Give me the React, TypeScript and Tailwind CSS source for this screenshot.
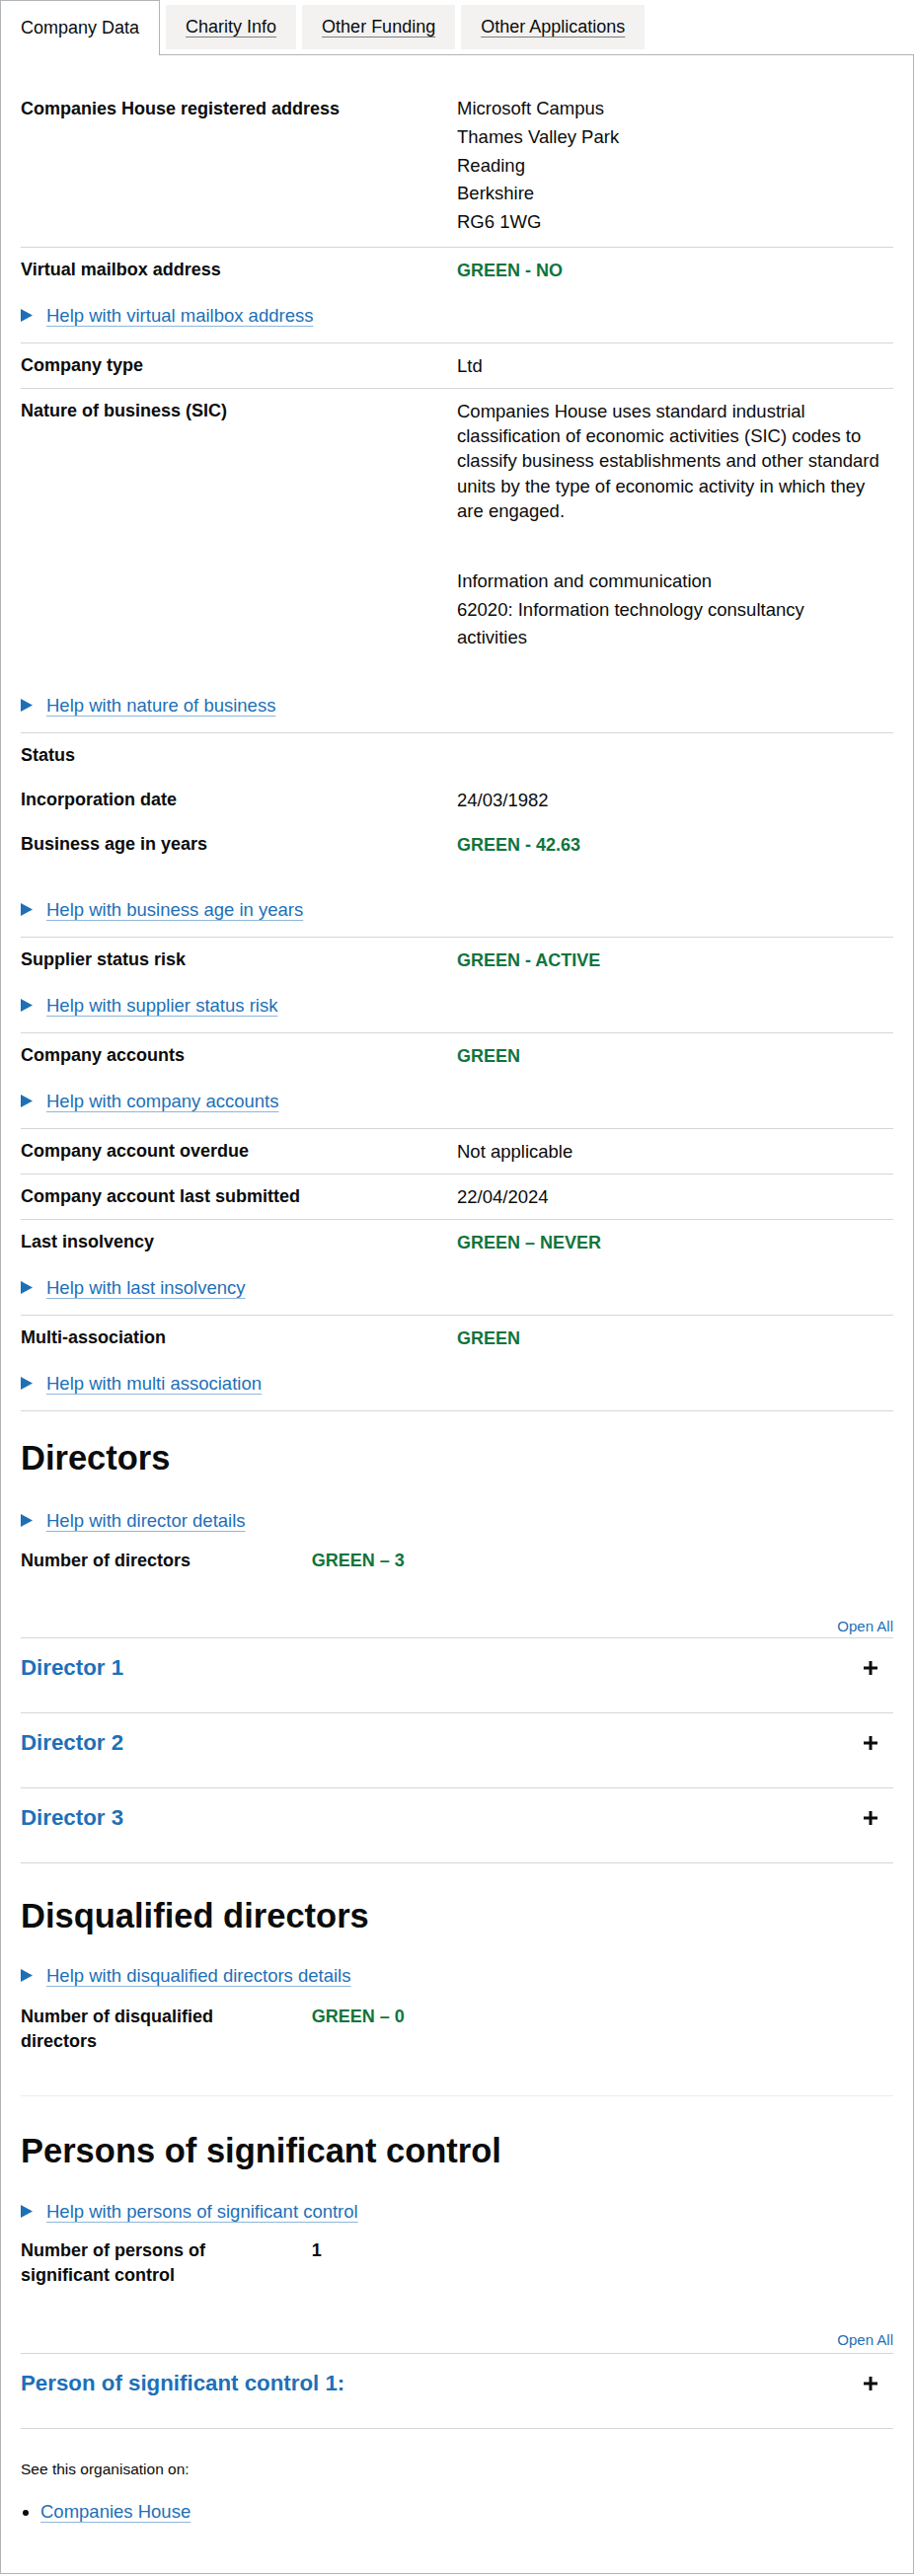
import React from "react";

const BORDER = "border-[#b1b4b6]";

function Triangle() {
  return (
    <svg width="12" height="13" viewBox="0 0 12 13" className="shrink-0">
      <path d="M0 0 L12 6.5 L0 13 Z" fill="#1d70b8" />
    </svg>
  );
}

function Help({ text, className = "" }: { text: string; className?: string }) {
  return (
    <div className={`flex items-center ${className}`}>
      <Triangle />
      <span className="ml-[14px] text-[18.5px] leading-[25px] text-[#1d70b8] underline decoration-[#1d70b8]/50 decoration-1 underline-offset-[4px]">
        {text}
      </span>
    </div>
  );
}

function Green({ children }: { children: React.ReactNode }) {
  return <span className="font-bold text-[18px] text-[#0f743c]">{children}</span>;
}

function Row({
  label,
  children,
  help,
  helpClass = "mt-[20px]",
  border = true,
  labelClass = "leading-[25px]",
}: {
  label: string;
  children?: React.ReactNode;
  help?: string;
  helpClass?: string;
  border?: boolean;
  labelClass?: string;
}) {
  return (
    <div className={`py-[10px] ${border ? "border-b border-[#d6d6d6]" : ""}`}>
      <div className="flex">
        <div className={`w-1/2 pr-5 font-bold text-[18px] ${labelClass}`}>{label}</div>
        <div className="w-1/2 text-[18.5px] leading-[25px]">{children}</div>
      </div>
      {help && <Help text={help} className={`${helpClass} mb-[5px]`} />}
    </div>
  );
}

function Plus() {
  return (
    <svg width="16" height="16" viewBox="0 0 16 16" className="mr-[15px] shrink-0">
      <path d="M8 1 V15 M1 8 H15" stroke="#0b0c0c" strokeWidth="3" />
    </svg>
  );
}

function AccSection({ title, last = false }: { title: string; last?: boolean }) {
  return (
    <div
      className={`border-t border-[#d6d6d6] pt-[15px] pb-[30px] flex items-center justify-between ${
        last ? "border-b" : ""
      }`}
    >
      <span className="text-[22.3px] leading-[30px] font-bold text-[#1d70b8]">{title}</span>
      <Plus />
    </div>
  );
}

function Heading({ children, className = "" }: { children: React.ReactNode; className?: string }) {
  return <h2 className={`text-[34.5px] leading-[40px] font-bold ${className}`}>{children}</h2>;
}

function CountRow({ label, children, className = "" }: { label: string; children: React.ReactNode; className?: string }) {
  return (
    <div className={`flex ${className}`}>
      <div className="w-1/3 pr-[30px] font-bold text-[18px] leading-[24.5px]">{label}</div>
      <div className="w-2/3 font-bold text-[18px] leading-[24.5px]">{children}</div>
    </div>
  );
}

export default function App() {
  return (
    <div className="w-[926px] bg-white text-[#0b0c0c] font-['Liberation_Sans',Arial,sans-serif]">
      {/* Tabs */}
      <div className="flex items-start h-[55px]">
        <div className={`relative z-10 h-[56px] bg-white border border-b-0 ${BORDER} px-[20px] flex items-center text-[18px]`}>
          Company Data
        </div>
        {["Charity Info", "Other Funding", "Other Applications"].map((t) => (
          <div
            key={t}
            className="ml-[6px] mt-[5px] h-[45px] bg-[#f3f2f1] px-[20px] flex items-center text-[18px] underline decoration-[#0b0c0c]/50 decoration-1 underline-offset-[4px]"
          >
            {t}
          </div>
        ))}
      </div>

      {/* Panel */}
      <div className={`border ${BORDER} px-[20px] pt-[30px] pb-[30px]`}>
        <Row label="Companies House registered address" labelClass="leading-[28.75px]">
          <div className="leading-[28.75px]">
            <div>Microsoft Campus</div>
            <div>Thames Valley Park</div>
            <div>Reading</div>
            <div>Berkshire</div>
            <div>RG6 1WG</div>
          </div>
        </Row>
        <Row label="Virtual mailbox address" help="Help with virtual mailbox address">
          <Green>GREEN - NO</Green>
        </Row>
        <Row label="Company type">Ltd</Row>
        <Row label="Nature of business (SIC)" help="Help with nature of business" helpClass="mt-[41.5px]">
          <div className="leading-[25.25px]">
            <div>Companies House uses standard industrial</div>
            <div>classification of economic activities (SIC) codes to</div>
            <div>classify business establishments and other standard</div>
            <div>units by the type of economic activity in which they</div>
            <div>are engaged.</div>
          </div>
          <div className="mt-[45px] leading-[28.5px]">
            <div>Information and communication</div>
            <div>62020: Information technology consultancy</div>
            <div>activities</div>
          </div>
        </Row>
        <Row label="Status" border={false} />
        <Row label="Incorporation date" border={false}>
          24/03/1982
        </Row>
        <Row label="Business age in years" help="Help with business age in years" helpClass="mt-[39.5px]">
          <Green>GREEN - 42.63</Green>
        </Row>
        <Row label="Supplier status risk" help="Help with supplier status risk">
          <Green>GREEN - ACTIVE</Green>
        </Row>
        <Row label="Company accounts" help="Help with company accounts">
          <Green>GREEN</Green>
        </Row>
        <Row label="Company account overdue">Not applicable</Row>
        <Row label="Company account last submitted">22/04/2024</Row>
        <Row label="Last insolvency" help="Help with last insolvency">
          <Green>GREEN – NEVER</Green>
        </Row>
        <Row label="Multi-association" help="Help with multi association">
          <Green>GREEN</Green>
        </Row>

        {/* Directors */}
        <Heading className="mt-[27px]">Directors</Heading>
        <Help text="Help with director details" className="mt-[31.5px]" />
        <CountRow label="Number of directors" className="mt-[16px]">
          <span className="text-[#0f743c]">GREEN – 3</span>
        </CountRow>
        <div className="mt-[44.5px] mb-[1px] text-right text-[15px] leading-[20px] text-[#1d70b8]">Open All</div>
        <AccSection title="Director 1" />
        <AccSection title="Director 2" />
        <AccSection title="Director 3" last />

        {/* Disqualified */}
        <Heading className="mt-[33px]">Disqualified directors</Heading>
        <Help text="Help with disqualified directors details" className="mt-[28px]" />
        <CountRow label="Number of disqualified directors" className="mt-[17px]">
          <span className="text-[#0f743c]">GREEN – 0</span>
        </CountRow>
        <div className="mt-[42.5px] border-t border-[#ececec]" />

        {/* PSC */}
        <Heading className="mt-[35px]">Persons of significant control</Heading>
        <Help text="Help with persons of significant control" className="mt-[29.5px]" />
        <CountRow label="Number of persons of significant control" className="mt-[15px]">
          1
        </CountRow>
        <div className="mt-[43.5px] mb-[3px] text-right text-[15px] leading-[20px] text-[#1d70b8]">Open All</div>
        <AccSection title="Person of significant control 1:" last />

        <p className="mt-[31px] text-[15.5px] leading-[20px]">See this organisation on:</p>
        <ul className="mt-[20.5px] mb-[20px] list-disc pl-[20px]">
          <li className="text-[18.5px] leading-[25px]">
            <span className="text-[#1d70b8] underline decoration-[#1d70b8]/50 decoration-1 underline-offset-[4px]">
              Companies House
            </span>
          </li>
        </ul>
      </div>
    </div>
  );
}
